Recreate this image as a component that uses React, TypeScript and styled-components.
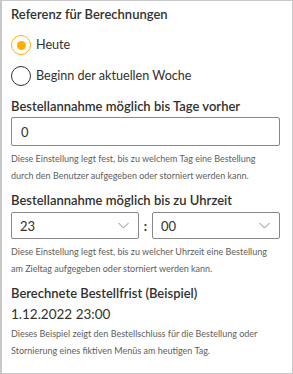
import React, { useState } from 'react';
import styled, { createGlobalStyle } from 'styled-components';

const GlobalStyle = createGlobalStyle`
  html, body {
    margin: 0;
    padding: 0;
    background: #ffffff;
  }
  body {
    font-family: Lato, 'Open Sans', sans-serif;
    color: #323130;
  }
`;

const HOURS = ['23'];
const MINUTES = ['00'];

const Chevron: React.FC = () => (
  <svg width="11" height="7" viewBox="0 0 11 7" fill="none">
    <path d="M0.5 1 L5.5 6 L10.5 1" stroke="#8a8886" strokeWidth="1" />
  </svg>
);

export default function App() {
  const [reference, setReference] = useState<'today' | 'week'>('today');

  return (
    <>
      <GlobalStyle />
      <Panel>
        <Section>
          <Heading>Referenz für Berechnungen</Heading>
          <RadioList>
            <RadioRow onClick={() => setReference('today')}>
              <RadioCircle $checked={reference === 'today'} />
              <RadioLabel>Heute</RadioLabel>
            </RadioRow>
            <RadioRow onClick={() => setReference('week')}>
              <RadioCircle $checked={reference === 'week'} />
              <RadioLabel>Beginn der aktuellen Woche</RadioLabel>
            </RadioRow>
          </RadioList>
        </Section>

        <Section>
          <Heading>Bestellannahme möglich bis Tage vorher</Heading>
          <TextField defaultValue="0" />
          <Hint>
            Diese Einstellung legt fest, bis zu welchem Tag eine Bestellung
            <br />
            durch den Benutzer aufgegeben oder storniert werden kann.
          </Hint>
        </Section>

        <Section>
          <Heading>Bestellannahme möglich bis zu Uhrzeit</Heading>
          <TimeRow>
            <Dropdown>
              <span>{HOURS[0]}</span>
              <Chevron />
            </Dropdown>
            <Colon>:</Colon>
            <Dropdown>
              <span>{MINUTES[0]}</span>
              <Chevron />
            </Dropdown>
          </TimeRow>
          <Hint>
            Diese Einstellung legt fest, bis zu welcher Uhrzeit eine Bestellung
            <br />
            am Zieltag aufgegeben oder storniert werden kann.
          </Hint>
        </Section>

        <Section>
          <Heading>Berechnete Bestellfrist (Beispiel)</Heading>
          <Result>1.12.2022 23:00</Result>
          <Hint $gap={1}>
            Dieses Beispiel zeigt den Bestellschluss für die Bestellung oder
            <br />
            Stornierung eines fiktiven Menüs am heutigen Tag.
          </Hint>
        </Section>
      </Panel>
    </>
  );
}

const Panel = styled.div`
  box-sizing: border-box;
  width: 293px;
  height: 374px;
  border: 1px solid #c8c8c8;
  border-left-width: 2px;
  padding: 3px 12px 0 9px;
  display: flex;
  flex-direction: column;
  gap: 6px;
`;

const Section = styled.div`
  display: flex;
  flex-direction: column;
`;

const Heading = styled.div`
  font-size: 13px;
  font-weight: 600;
  line-height: 20px;
  white-space: nowrap;
`;

const RadioList = styled.div`
  display: flex;
  flex-direction: column;
  gap: 11px;
  padding: 11px 0 4px;
`;

const RadioRow = styled.label`
  display: flex;
  align-items: center;
  gap: 5px;
  cursor: pointer;
`;

const RadioCircle = styled.span<{ $checked: boolean }>`
  box-sizing: border-box;
  width: 20px;
  height: 20px;
  border-radius: 50%;
  border: 1px solid ${(p) => (p.$checked ? '#ffb000' : '#323130')};
  display: flex;
  align-items: center;
  justify-content: center;

  &::after {
    content: '';
    width: 9px;
    height: 9px;
    border-radius: 50%;
    background: #ffb000;
    display: ${(p) => (p.$checked ? 'block' : 'none')};
  }
`;

const RadioLabel = styled.span`
  font-size: 12.6px;
  line-height: 20px;
`;

const TextField = styled.input`
  box-sizing: border-box;
  width: 100%;
  height: 29px;
  margin-top: 1px;
  border: 1px solid #8a8886;
  border-radius: 2px;
  padding: 0 9px;
  font-family: inherit;
  font-size: 13px;
  color: #323130;
  outline: none;
`;

const Hint = styled.div<{ $gap?: number }>`
  margin-top: ${(p) => p.$gap ?? 4}px;
  font-size: 9px;
  line-height: 17px;
  color: #605e5c;
  white-space: nowrap;
`;

const TimeRow = styled.div`
  display: flex;
  align-items: center;
  margin-top: 2px;
`;

const Dropdown = styled.div`
  box-sizing: border-box;
  flex: 1;
  height: 27px;
  border: 1px solid #8a8886;
  border-radius: 2px;
  padding: 0 9px 0 8px;
  display: flex;
  align-items: center;
  justify-content: space-between;
  font-size: 13px;
`;

const Colon = styled.span`
  width: 13px;
  text-align: center;
  font-size: 13px;
  font-weight: 700;
`;

const Result = styled.div`
  margin-top: 1px;
  font-size: 13.5px;
  line-height: 20px;
`;
